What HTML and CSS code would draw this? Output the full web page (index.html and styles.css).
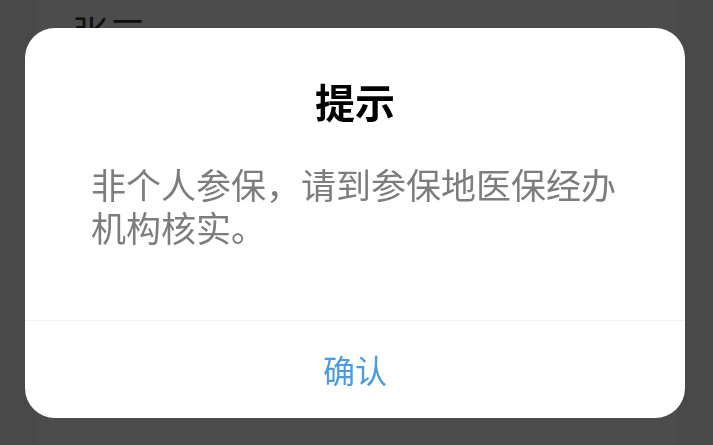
FILE: index.html
```html
<!DOCTYPE html>
<html lang="zh-CN">
<head>
<meta charset="utf-8">
<title>提示</title>
<link rel="stylesheet" href="styles.css">
</head>
<body>
<div class="page">
  <div class="card">
    <div class="name">张三</div>
  </div>
</div>
<div class="mask">
  <div class="dialog">
    <div class="dialog-body">
      <div class="dialog-title">提示</div>
      <div class="dialog-content">非个人参保，请到参保地医保经办机构核实。</div>
    </div>
    <div class="dialog-footer">
      <div class="dialog-btn">确认</div>
    </div>
  </div>
</div>
</body>
</html>
```
FILE: styles.css
```css
html, body {
  margin: 0;
  padding: 0;
  height: 100%;
}
body {
  background: #f4f4f4;
  font-family: "Noto Sans CJK SC", "Noto Sans", sans-serif;
  overflow: hidden;
}
.page {
  height: 100%;
  padding: 0 36px;
  box-sizing: border-box;
}
.card {
  background: #ffffff;
  height: 100%;
  padding: 14px 0 0 36px;
  box-sizing: border-box;
}
.name {
  font-size: 37px;
  line-height: 37px;
  color: #333333;
}
.mask {
  position: fixed;
  inset: 0;
  background: rgba(0, 0, 0, 0.7);
  display: flex;
  align-items: center;
  justify-content: center;
}
.dialog {
  width: 660px;
  height: 390px;
  margin-left: -3px;
  background: #ffffff;
  border-radius: 30px;
  display: flex;
  flex-direction: column;
  overflow: hidden;
}
.dialog-body {
  flex: 1;
  padding: 49px 66px 0;
}
.dialog-title {
  font-size: 40px;
  line-height: 48px;
  font-weight: 700;
  color: #000000;
  text-align: center;
}
.dialog-content {
  margin-top: 37px;
  font-size: 35px;
  line-height: 43px;
  color: #7d7d7d;
}
.dialog-footer {
  height: 97px;
  border-top: 1px solid #f3f3f3;
  display: flex;
  align-items: center;
  justify-content: center;
}
.dialog-btn {
  font-size: 32px;
  line-height: 40px;
  color: #4b9be3;
}
```
